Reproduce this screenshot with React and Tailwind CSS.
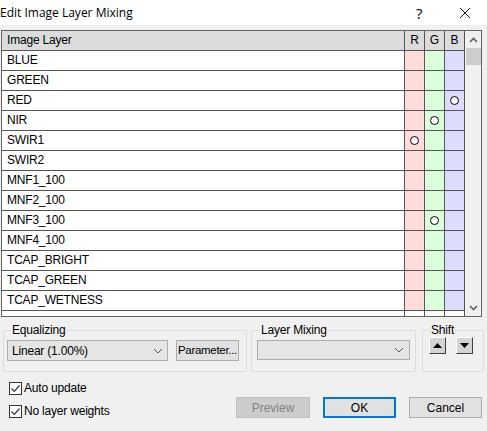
import React from "react";

const rows = [
  ["BLUE", null],
  ["GREEN", null],
  ["RED", "B"],
  ["NIR", "G"],
  ["SWIR1", "R"],
  ["SWIR2", null],
  ["MNF1_100", null],
  ["MNF2_100", null],
  ["MNF3_100", "G"],
  ["MNF4_100", null],
  ["TCAP_BRIGHT", null],
  ["TCAP_GREEN", null],
  ["TCAP_WETNESS", null],
];

function Circle() {
  return <div className="w-[9px] h-[9px] rounded-full border border-black bg-white" />;
}

function Cell({ color, on }) {
  return (
    <div className={`w-[20px] h-full border-l border-[#555] flex items-center justify-center ${color}`}>
      {on ? <Circle /> : null}
    </div>
  );
}

function Check({ label }) {
  return (
    <div className="flex items-center gap-[2px] h-[16px]">
      <div className="w-[13px] h-[13px] border border-[#333] bg-white flex items-center justify-center">
        <svg width="11" height="11" viewBox="0 0 11 11">
          <path d="M1.5 5.5 L4.3 8.3 L9.5 2.5" fill="none" stroke="#333" strokeWidth="1.2" />
        </svg>
      </div>
      <span className="text-[12px] tracking-[-0.2px] text-black">{label}</span>
    </div>
  );
}

function Chevron() {
  return (
    <svg width="10" height="6" viewBox="0 0 10 6">
      <path d="M1 1 L5 5 L9 1" fill="none" stroke="#555" strokeWidth="1" />
    </svg>
  );
}

export default function App() {
  return (
    <div
      className="w-[487px] h-[431px] bg-[#f0f0f0] flex flex-col overflow-hidden text-black"
      style={{ fontFamily: '"Liberation Sans", Arial, sans-serif' }}
    >
      {/* title bar */}
      <div className="h-[25px] bg-white flex items-center shrink-0 relative">
        <span
          className="text-[12px]"
          style={{ fontFamily: '"Segoe UI", "Open Sans", "Noto Sans", sans-serif' }}
        >
          Edit Image Layer Mixing
        </span>
        <span className="absolute left-[416px] top-[2px] text-[15px]" style={{ fontFamily: '"Open Sans", sans-serif' }}>?</span>
        <svg className="absolute left-[459px] top-[7px]" width="12" height="12" viewBox="0 0 12 12">
          <path d="M1 1 L11 11 M11 1 L1 11" stroke="#111" strokeWidth="1" />
        </svg>
      </div>

      {/* table */}
      <div className="mt-[5px] ml-[1px] w-[481px] h-[287px] border border-[#646464] bg-white flex">
        <div className="flex-1 flex flex-col">
          <div className="h-[20px] bg-[#dcdcdc] border-b border-[#555] flex shrink-0">
            <div className="flex-1 pl-[5px] text-[12px] tracking-[-0.2px] leading-[19px]">Image Layer</div>
            <div className="w-[20px] border-l border-[#555] text-[12px] leading-[19px] text-center">R</div>
            <div className="w-[20px] border-l border-[#555] text-[12px] leading-[19px] text-center">G</div>
            <div className="w-[20px] border-l border-[#555] text-[12px] leading-[19px] text-center">B</div>
          </div>
          {rows.map(([name, on]) => (
            <div key={name} className="h-[20px] border-b border-[#555] flex shrink-0">
              <div className="flex-1 pl-[5px] text-[12px] tracking-[-0.2px] leading-[19px]">{name}</div>
              <Cell color="bg-[#ffdcdc]" on={on === "R"} />
              <Cell color="bg-[#dcffdc]" on={on === "G"} />
              <Cell color="bg-[#dcdcff]" on={on === "B"} />
            </div>
          ))}
          <div className="flex-1 flex">
            <div className="flex-1" />
            <div className="w-[20px] border-l border-[#555]" />
            <div className="w-[20px] border-l border-[#555]" />
            <div className="w-[20px] border-l border-[#555]" />
          </div>
        </div>
        <div className="w-[17px] bg-[#f0f0f0] border-l border-[#555] flex flex-col items-center">
          <div className="h-[17px] flex items-center justify-center">
            <svg width="9" height="6" viewBox="0 0 9 6">
              <path d="M1 5 L4.5 1.5 L8 5" fill="none" stroke="#606060" strokeWidth="1.6" />
            </svg>
          </div>
          <div className="w-[15px] h-[17px] bg-[#cdcdcd]" />
          <div className="flex-1" />
          <div className="h-[17px] flex items-center justify-center">
            <svg width="9" height="6" viewBox="0 0 9 6">
              <path d="M1 1 L4.5 4.5 L8 1" fill="none" stroke="#606060" strokeWidth="1.6" />
            </svg>
          </div>
        </div>
      </div>

      {/* groups */}
      <div className="flex mt-[6px] h-[46px] text-[12px] tracking-[-0.2px]">
        <div className="ml-[3px] w-[244px] mt-[7px] h-[42px] border border-[#dcdcdc] rounded-[2px] relative">
          <span className="absolute left-[7px] top-[-8px] px-[1px] bg-[#f0f0f0] leading-[14px]">Equalizing</span>
          <div className="flex mt-[9px] ml-[3px] gap-[8px]">
            <div className="w-[161px] h-[21px] border border-[#adadad] bg-[#e5e5e5] flex items-center justify-between px-[4px]">
              <span>Linear (1.00%)</span>
              <Chevron />
            </div>
            <div className="w-[63px] h-[21px] border border-[#adadad] bg-[#e1e1e1] flex items-center justify-center text-[11.5px] tracking-[-0.3px]">
              Parameter...
            </div>
          </div>
        </div>
        <div className="ml-[4px] w-[165px] mt-[7px] h-[42px] border border-[#dcdcdc] rounded-[2px] relative">
          <span className="absolute left-[8px] top-[-8px] px-[1px] bg-[#f0f0f0] leading-[14px]">Layer Mixing</span>
          <div className="mt-[9px] ml-[5px] w-[153px] h-[20px] border border-[#adadad] bg-[#e5e5e5] flex items-center justify-end px-[5px]">
            <Chevron />
          </div>
        </div>
        <div className="ml-[6px] w-[62px] mt-[7px] h-[42px] border border-[#dcdcdc] rounded-[2px] relative">
          <span className="absolute left-[7px] top-[-8px] px-[1px] bg-[#f0f0f0] leading-[14px]">Shift</span>
          <div className="flex mt-[6px] ml-[6px] gap-[10px]">
            <div className="w-[17px] h-[17px] bg-[#d4d4d4] border-t border-l border-white border-r border-b border-r-[#404040] border-b-[#404040] flex items-center justify-center">
              <svg width="9" height="5" viewBox="0 0 9 5"><path d="M0 5 L4.5 0 L9 5 Z" fill="#000" /></svg>
            </div>
            <div className="w-[17px] h-[17px] bg-[#d4d4d4] border-t border-l border-white border-r border-b border-r-[#404040] border-b-[#404040] flex items-center justify-center">
              <svg width="9" height="5" viewBox="0 0 9 5"><path d="M0 0 L4.5 5 L9 0 Z" fill="#000" /></svg>
            </div>
          </div>
        </div>
      </div>

      {/* bottom */}
      <div className="flex mt-[8px]">
        <div className="ml-[9px] flex flex-col gap-[7px] mt-[3px]">
          <Check label="Auto update" />
          <Check label="No layer weights" />
        </div>
        <div className="ml-auto mr-[5px] flex gap-[13px] mt-[20px] text-[12px]">
          <div className="w-[74px] h-[21px] border border-[#bfbfbf] bg-[#cccccc] text-[#838383] flex items-center justify-center">Preview</div>
          <div className="w-[73px] h-[21px] border-2 border-[#0078d7] bg-[#e1e1e1] flex items-center justify-center">OK</div>
          <div className="w-[73px] h-[21px] border border-[#adadad] bg-[#e1e1e1] flex items-center justify-center">Cancel</div>
        </div>
      </div>
    </div>
  );
}
